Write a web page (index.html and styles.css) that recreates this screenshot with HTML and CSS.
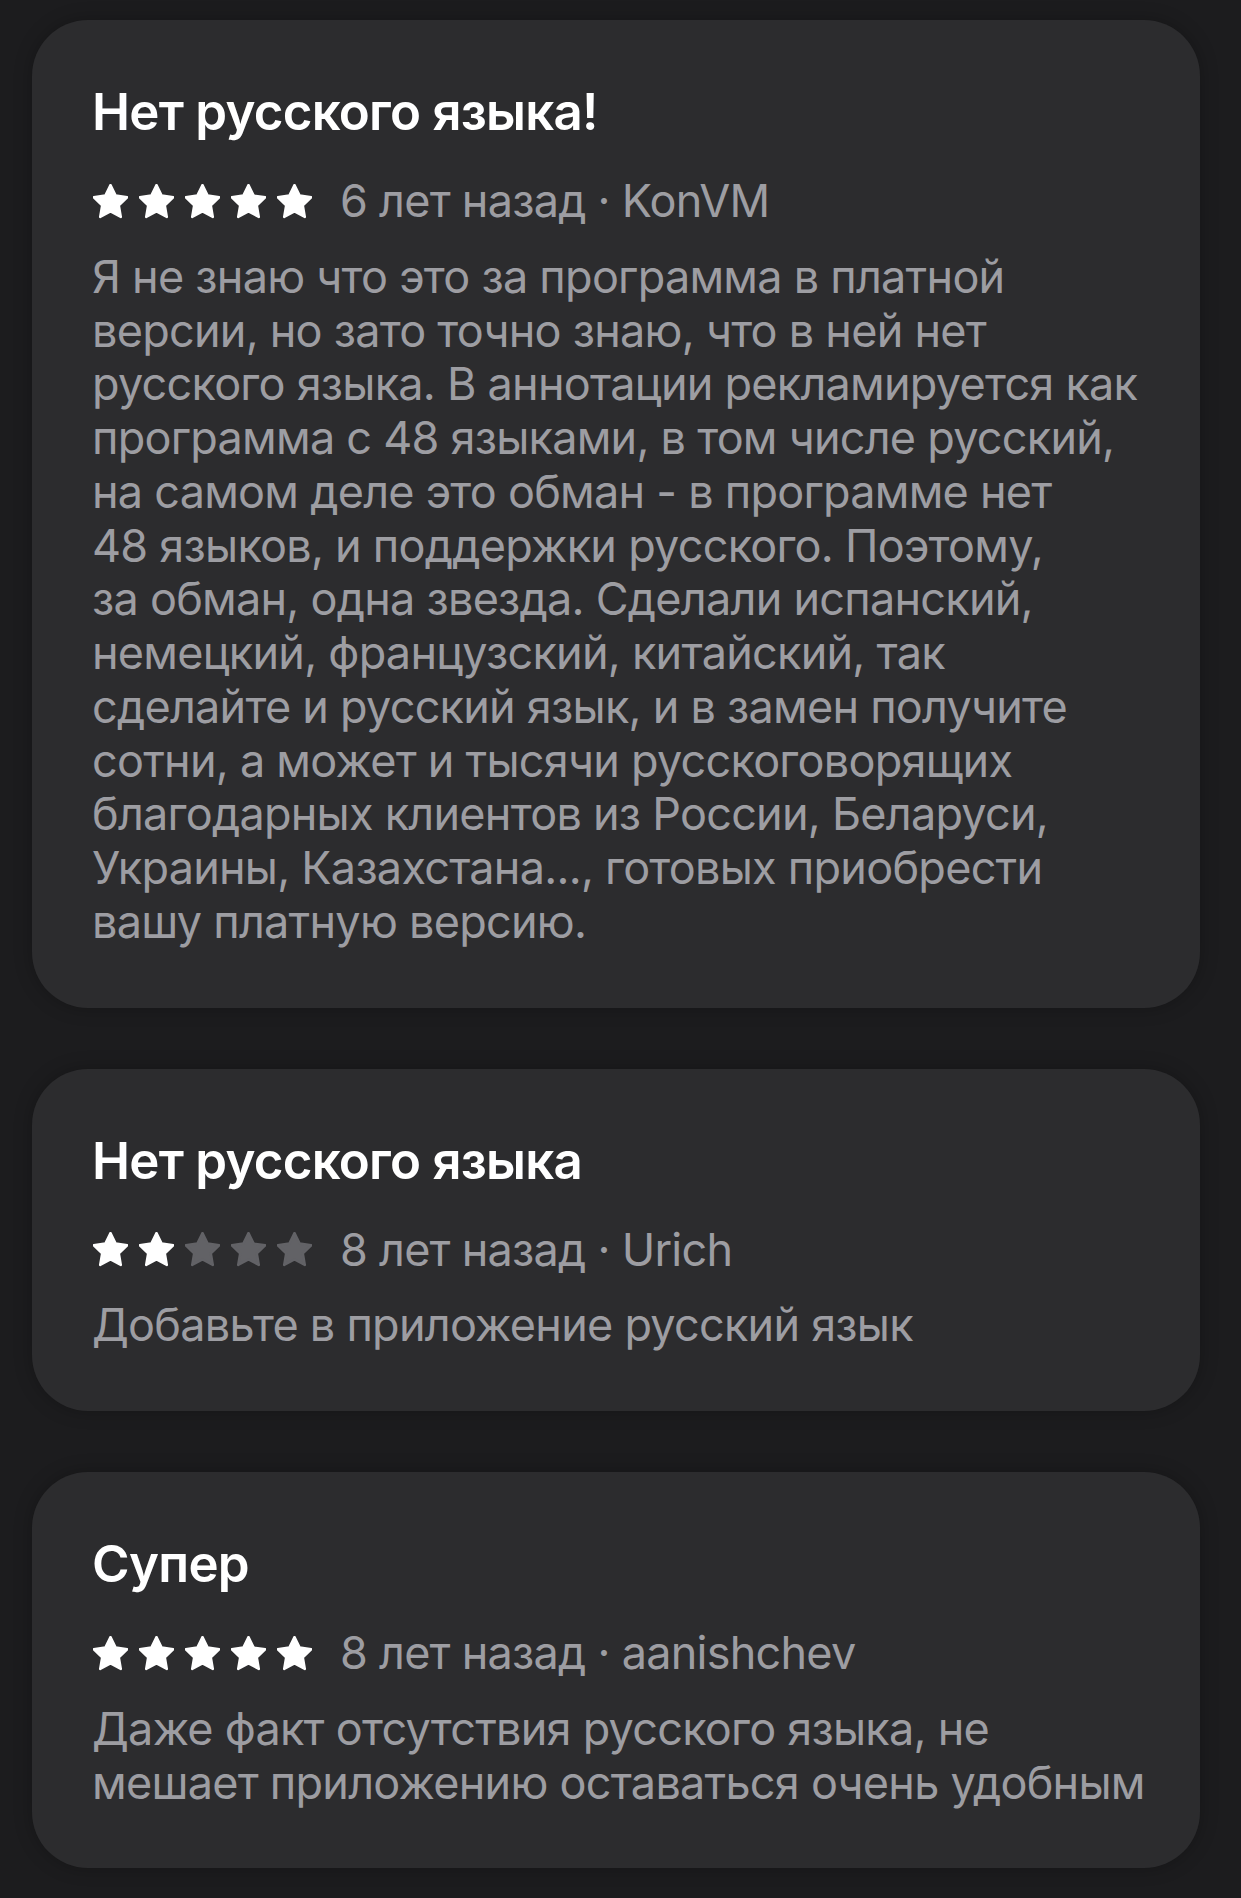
FILE: index.html
```html
<!DOCTYPE html>
<html lang="ru">
<head>
<meta charset="utf-8">
<title>Отзывы</title>
<link rel="stylesheet" href="styles.css">
</head>
<body>
<svg width="0" height="0" class="defs" aria-hidden="true">
  <defs>
    <path id="star" d="M12 2.6l2.95 6.02 6.6.96-4.78 4.66 1.13 6.58L12 17.72l-5.9 3.1 1.13-6.58-4.78-4.66 6.6-.96z"/>
  </defs>
</svg>
<main class="list">
  <section class="card">
    <h2 class="title">Нет русского языка!</h2>
    <div class="meta">
      <div class="stars">
        <svg class="star on" viewBox="2 2 20 20"><use href="#star"/></svg>
        <svg class="star on" viewBox="2 2 20 20"><use href="#star"/></svg>
        <svg class="star on" viewBox="2 2 20 20"><use href="#star"/></svg>
        <svg class="star on" viewBox="2 2 20 20"><use href="#star"/></svg>
        <svg class="star on" viewBox="2 2 20 20"><use href="#star"/></svg>
      </div>
      <span class="info">6 лет назад · KonVM</span>
    </div>
    <p class="text">Я не знаю что это за программа в платной<br>версии, но зато точно знаю, что в ней нет<br>русского языка. В аннотации рекламируется как<br>программа с 48 языками, в том числе русский,<br>на самом деле это обман - в программе нет<br>48 языков, и поддержки русского. Поэтому,<br>за обман, одна звезда. Сделали испанский,<br>немецкий, французский, китайский, так<br>сделайте и русский язык, и в замен получите<br>сотни, а может и тысячи русскоговорящих<br>благодарных клиентов из России, Беларуси,<br>Украины, Казахстана..., готовых приобрести<br>вашу платную версию.</p>
  </section>

  <section class="card">
    <h2 class="title">Нет русского языка</h2>
    <div class="meta">
      <div class="stars">
        <svg class="star on" viewBox="2 2 20 20"><use href="#star"/></svg>
        <svg class="star on" viewBox="2 2 20 20"><use href="#star"/></svg>
        <svg class="star off" viewBox="2 2 20 20"><use href="#star"/></svg>
        <svg class="star off" viewBox="2 2 20 20"><use href="#star"/></svg>
        <svg class="star off" viewBox="2 2 20 20"><use href="#star"/></svg>
      </div>
      <span class="info">8 лет назад · Urich</span>
    </div>
    <p class="text">Добавьте в приложение русский язык</p>
  </section>

  <section class="card">
    <h2 class="title">Супер</h2>
    <div class="meta">
      <div class="stars">
        <svg class="star on" viewBox="2 2 20 20"><use href="#star"/></svg>
        <svg class="star on" viewBox="2 2 20 20"><use href="#star"/></svg>
        <svg class="star on" viewBox="2 2 20 20"><use href="#star"/></svg>
        <svg class="star on" viewBox="2 2 20 20"><use href="#star"/></svg>
        <svg class="star on" viewBox="2 2 20 20"><use href="#star"/></svg>
      </div>
      <span class="info">8 лет назад · aanishchev</span>
    </div>
    <p class="text">Даже факт отсутствия русского языка, не<br>мешает приложению оставаться очень удобным</p>
  </section>
</main>
</body>
</html>
```

FILE: styles.css
```css
* {
  box-sizing: border-box;
}

html, body {
  margin: 0;
  padding: 0;
  background: #1c1c1e;
}

body {
  font-family: Inter, "Noto Sans", "Liberation Sans", sans-serif;
  min-height: 1898px;
}

.defs {
  position: absolute;
  width: 0;
  height: 0;
  overflow: hidden;
}

.list {
  display: flex;
  flex-direction: column;
  gap: 61px;
  padding: 20px 41px 0 32px;
}

.card {
  background: #2c2c2e;
  border-radius: 56px;
  padding: 61px 61px 59px 60px;
  box-shadow: 0 0 18px rgba(0, 0, 0, 0.25);
}

.title {
  margin: 0;
  font-size: 51px;
  line-height: 61px;
  font-weight: 600;
  color: #ffffff;
  letter-spacing: -0.75px;
}

.meta {
  display: flex;
  align-items: center;
  height: 54px;
  margin-top: 32px;
}

.stars {
  display: flex;
  gap: 11px;
  margin-left: 1px;
  margin-right: 28px;
}

.star {
  width: 35px;
  height: 35px;
  display: block;
}

.star use {
  stroke-width: 1.4;
  stroke-linejoin: round;
}

.star.on {
  fill: #ffffff;
  stroke: #ffffff;
}

.star.off {
  fill: #626266;
  stroke: #626266;
}

.info {
  font-size: 45px;
  line-height: 54px;
  color: #9d9da2;
  white-space: nowrap;
  letter-spacing: -0.75px;
}

.text {
  margin: 21.8px 0 0 0;
  font-size: 45px;
  line-height: 53.75px;
  color: #9d9da2;
  white-space: nowrap;
  letter-spacing: -0.75px;
}
```
